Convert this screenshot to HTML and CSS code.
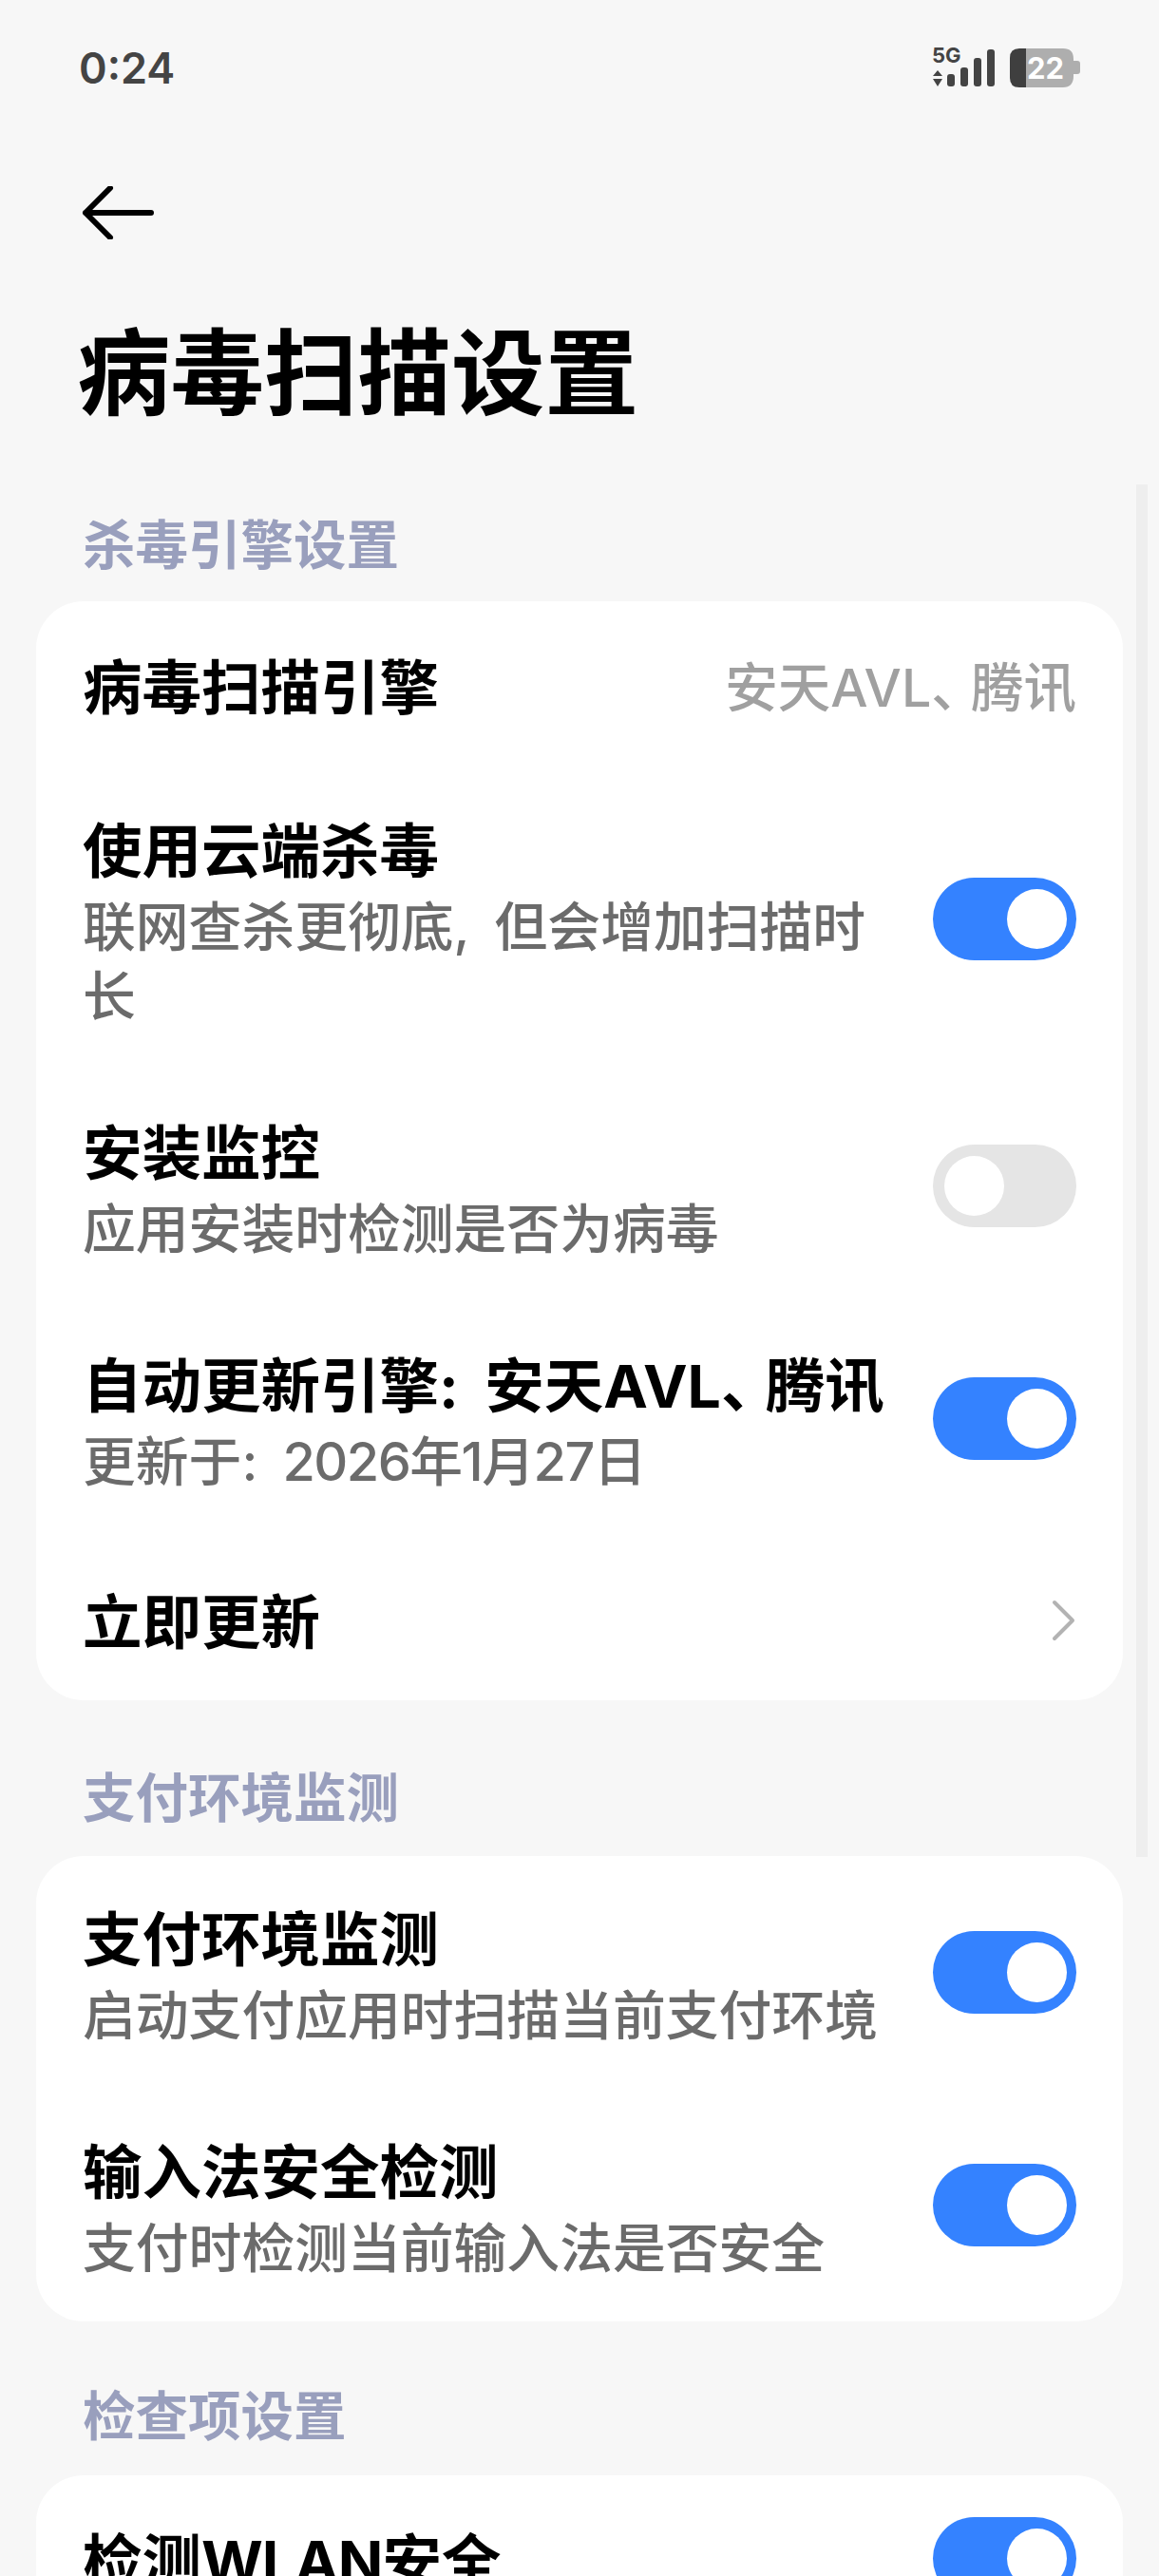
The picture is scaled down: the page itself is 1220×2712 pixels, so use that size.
FILE: index.html
```html
<!DOCTYPE html>
<html lang="zh-CN">
<head>
<meta charset="utf-8">
<title>病毒扫描设置</title>
<link rel="stylesheet" href="styles.css">
</head>
<body>
<div class="page">
  <div class="statusbar">
    <span class="time">0:24</span>
    <svg class="status-icons" width="158" height="46" viewBox="0 0 158 46">
      <text class="s5g" x="0" y="19">5G</text>
      <path d="M6 27 L11 33 H1 Z M6 44 L11 36 H1 Z" fill="#444"/>
      <rect x="16" y="31" width="8" height="13" rx="3" fill="#444"/>
      <rect x="30" y="24" width="8" height="20" rx="3" fill="#444"/>
      <rect x="44" y="14" width="8" height="30" rx="3" fill="#444"/>
      <rect x="58" y="5" width="8" height="39" rx="3" fill="#444"/>
      <path d="M92 4 H138 Q149 4 149 15 V17 H153 Q156 17 156 20 V28 Q156 31 153 31 H149 V33 Q149 45 138 45 H92 Z" fill="#aeaeae"/>
      <path d="M99 4 H92 Q82 4 82 14 V35 Q82 45 92 45 H99 Z" fill="#3f3f3f"/>
      <text class="batt" x="100" y="36">22</text>
    </svg>
  </div>
  <div class="nav">
    <svg class="back" width="76" height="56" viewBox="0 0 76 56">
      <path d="M30 2 L4 28 L30 54 M4 28 H73" fill="none" stroke="#000" stroke-width="6" stroke-linecap="round" stroke-linejoin="round"/>
    </svg>
  </div>
  <h1 class="title">病毒扫描设置</h1>

  <h2 class="section first">杀毒引擎设置</h2>
  <div class="card">
    <div class="row short">
      <div class="label">病毒扫描引擎</div>
      <div class="value">安天AVL<span class="tight">、</span>腾讯</div>
    </div>
    <div class="row">
      <div class="text">
        <div class="label">使用云端杀毒</div>
        <div class="sub">联网查杀更彻底<span class="wide">,</span> 但会增加扫描时长</div>
      </div>
      <div class="toggle on"></div>
    </div>
    <div class="row">
      <div class="text">
        <div class="label">安装监控</div>
        <div class="sub">应用安装时检测是否为病毒</div>
      </div>
      <div class="toggle"></div>
    </div>
    <div class="row">
      <div class="text">
        <div class="label">自动更新引擎<span class="wide">:</span> 安天AVL<span class="tight">、</span>腾讯</div>
        <div class="sub">更新于<span class="wide">:</span> <span class="date">2026年1月27日</span></div>
      </div>
      <div class="toggle on"></div>
    </div>
    <div class="row last">
      <div class="label">立即更新</div>
      <svg class="chevron" width="26" height="44" viewBox="0 0 26 44">
        <path d="M3 3 L22 22 L3 41" fill="none" stroke="#b3b3b3" stroke-width="4" stroke-linecap="round" stroke-linejoin="round"/>
      </svg>
    </div>
  </div>

  <h2 class="section">支付环境监测</h2>
  <div class="card">
    <div class="row">
      <div class="text">
        <div class="label">支付环境监测</div>
        <div class="sub">启动支付应用时扫描当前支付环境</div>
      </div>
      <div class="toggle on"></div>
    </div>
    <div class="row">
      <div class="text">
        <div class="label">输入法安全检测</div>
        <div class="sub">支付时检测当前输入法是否安全</div>
      </div>
      <div class="toggle on"></div>
    </div>
  </div>

  <h2 class="section third">检查项设置</h2>
  <div class="card">
    <div class="row short">
      <div class="label">检测<span class="latin">WLAN</span>安全</div>
      <div class="toggle on"></div>
    </div>
  </div>
  <div class="scrollbar"></div>
</div>
</body>
</html>
```

FILE: styles.css
```css
* { box-sizing: border-box; }
html, body { margin: 0; padding: 0; }
body {
  width: 1220px;
  height: 2712px;
  overflow: hidden;
  background: #f7f7f7;
  font-family: Inter, "Noto Sans CJK SC", sans-serif;
  color: #000;
}
.page { position: relative; height: 2712px; overflow: hidden; display: flex; flex-direction: column; }
.statusbar {
  height: 142px;
  flex: none;
  display: flex;
  align-items: center;
  justify-content: space-between;
  padding: 0 81px 0 83px;
}
.time { font-size: 45px; font-weight: 600; color: #444; line-height: 1; }
.status-icons { display: block; margin-top: -2px; overflow: visible; }
.s5g { font: 700 22px Inter, sans-serif; fill: #444; }
.batt { font: 700 31px Inter, sans-serif; fill: #fff; }
.nav { height: 164px; flex: none; display: flex; align-items: center; padding-left: 86px; }
.back { display: block; }
.title { margin: 0; height: 178px; flex: none; line-height: 176px; font-size: 98.5px; font-weight: 700; padding-left: 81px; }
.section {
  margin: 63px 0 21px;
  padding-left: 87px;
  flex: none;
  font-size: 55.5px;
  line-height: 80px;
  font-weight: 700;
  color: #999fbd;
}
.section.first { margin: 50px 0 19px; }
.section.third { margin: 60px 0 22px; }
.card {
  flex: none;
  margin: 0 38px;
  background: #fff;
  border-radius: 50px;
  padding: 0 49px;
}
.row {
  display: flex;
  align-items: center;
  justify-content: space-between;
  gap: 40px;
  padding: 48px 0 41px;
}
.row.short { height: 175px; padding: 7px 0 0; }
.row.last { height: 174px; padding: 9px 0 0; }
.text { flex: 1; min-width: 0; }
.label { font-size: 62.5px; line-height: 80px; font-weight: 700; }
.sub { font-size: 55.8px; line-height: 73px; margin-top: 3px; color: #6b6b6b; font-weight: 500; }
.value { font-size: 55.5px; line-height: 80px; color: #a0a0a0; font-weight: 500; }
.tight { letter-spacing: -0.25em; }
.wide { letter-spacing: 0.2em; }
.date { letter-spacing: -1.5px; }
.latin { letter-spacing: -1px; }
.toggle {
  flex: none;
  width: 151px;
  height: 87px;
  margin-top: -7px;
  border-radius: 44px;
  background: #e5e5e5;
  display: flex;
  align-items: center;
  padding: 0 12px;
}
.toggle::after { content: ""; width: 63px; height: 63px; border-radius: 50%; background: #fff; }
.toggle.on { background: #3482ff; justify-content: flex-end; padding-right: 10px; }
.chevron { display: block; margin-top: -4px; }
.scrollbar {
  position: absolute;
  left: 1196px;
  top: 510px;
  width: 12px;
  height: 1445px;
  background: #eeeeee;
}
```
